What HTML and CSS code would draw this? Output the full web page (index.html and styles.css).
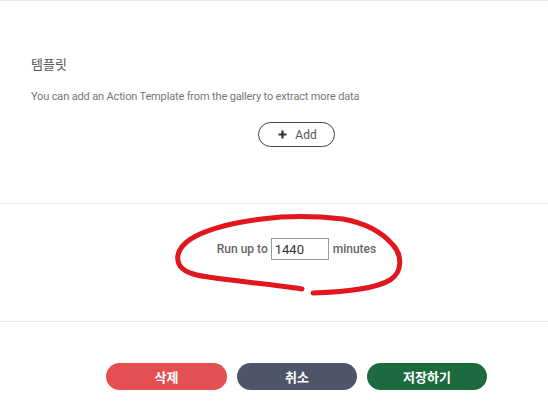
FILE: index.html
```html
<!DOCTYPE html>
<html lang="ko">
<head>
<meta charset="utf-8">
<title>Template</title>
<link rel="stylesheet" href="styles.css">
</head>
<body>
<div class="page">
  <section class="template">
    <h2 class="title">템플릿</h2>
    <p class="desc">You can add an Action Template from the gallery to extract more data</p>
    <div class="add-row">
      <button class="add-btn" type="button">
        <svg class="plus" width="9" height="9" viewBox="0 0 9 9" aria-hidden="true"><path d="M4.5 0.5v8M0.5 4.5h8" stroke="#333" stroke-width="2.2" fill="none"/></svg>
        <span>Add</span>
      </button>
    </div>
  </section>
  <section class="runtime">
    <div class="run-row">
      <span class="run-label">Run up to</span>
      <input class="run-input" type="text" value="1440">
      <span class="run-label">minutes</span>
    </div>
  </section>
  <section class="actions">
    <button class="btn btn-delete" type="button">삭제</button>
    <button class="btn btn-cancel" type="button">취소</button>
    <button class="btn btn-save" type="button">저장하기</button>
  </section>
  <svg class="scribble" width="548" height="408" viewBox="0 0 548 408" aria-hidden="true">
    <path d="M 313 293 C 345 292, 375 289, 390 280 C 403 272, 402 255, 393 245 C 382 232, 365 223, 343 219 C 315 216, 285 216, 262 219 C 238 222, 212 228, 196 236 C 180 244, 174 256, 180 266 C 186 274, 200 276, 215 278 C 245 282, 275 285, 302 289" fill="none" stroke="#e1161f" stroke-width="5" stroke-linecap="round" stroke-linejoin="round"/>
  </svg>
</div>
</body>
</html>
```

FILE: styles.css
```css
html, body {
  margin: 0;
  padding: 0;
  overflow: hidden;
  background: #ffffff;
}

body {
  font-family: Roboto, "Noto Sans CJK KR", sans-serif;
}

.page {
  position: relative;
  width: 548px;
  height: 408px;
  border-top: 1px solid #e6e6e6;
  box-sizing: border-box;
}

.template {
  height: 203px;
  box-sizing: border-box;
  padding: 53px 0 0 31px;
  border-bottom: 1px solid #e6e6e6;
  display: flex;
  flex-direction: column;
}

.title {
  margin: 0;
  font-family: "Noto Sans CJK KR", sans-serif;
  font-size: 13px;
  font-weight: 400;
  line-height: 20px;
  color: #555555;
}

.desc {
  margin: 15px 0 0;
  font-size: 11px;
  letter-spacing: -0.15px;
  line-height: 16px;
  color: #777777;
}

.add-row {
  margin-top: 17px;
  padding-left: 14px;
  display: flex;
  justify-content: center;
}

.add-btn {
  width: 77px;
  height: 25px;
  box-sizing: border-box;
  border: 1px solid #444444;
  border-radius: 13px;
  background: #ffffff;
  display: flex;
  align-items: center;
  justify-content: center;
  gap: 8px;
  padding: 0 0 0 2px;
  font-family: Roboto, sans-serif;
  font-size: 12px;
  color: #555555;
}

.plus {
  display: block;
}

.runtime {
  height: 118px;
  box-sizing: border-box;
  padding: 34px 0 0 45px;
  border-bottom: 1px solid #e6e6e6;
}

.run-row {
  display: flex;
  align-items: center;
  justify-content: center;
  gap: 3px;
  height: 22px;
}

.run-label {
  font-size: 12px;
  font-weight: 500;
  color: #666666;
}

.run-input {
  width: 58px;
  height: 22px;
  box-sizing: border-box;
  border: 1px solid #999999;
  margin: 0 1px 0 0;
  padding: 0 3px;
  font-family: Roboto, sans-serif;
  font-size: 13px;
  color: #333333;
  outline: none;
}

.actions {
  padding: 41px 0 0 45px;
  display: flex;
  justify-content: center;
  gap: 10px;
}

.btn {
  width: 120px;
  height: 27px;
  border: none;
  border-radius: 14px;
  font-family: "Noto Sans CJK KR", sans-serif;
  font-size: 13px;
  font-weight: 700;
  color: #ffffff;
  padding: 0;
}

.btn-delete {
  width: 121px;
  background: #e44f52;
}

.btn-cancel {
  background: #4e5569;
}

.btn-save {
  background: #1d6a3e;
}

.scribble {
  position: absolute;
  top: -1px;
  left: 0;
  pointer-events: none;
}
```
